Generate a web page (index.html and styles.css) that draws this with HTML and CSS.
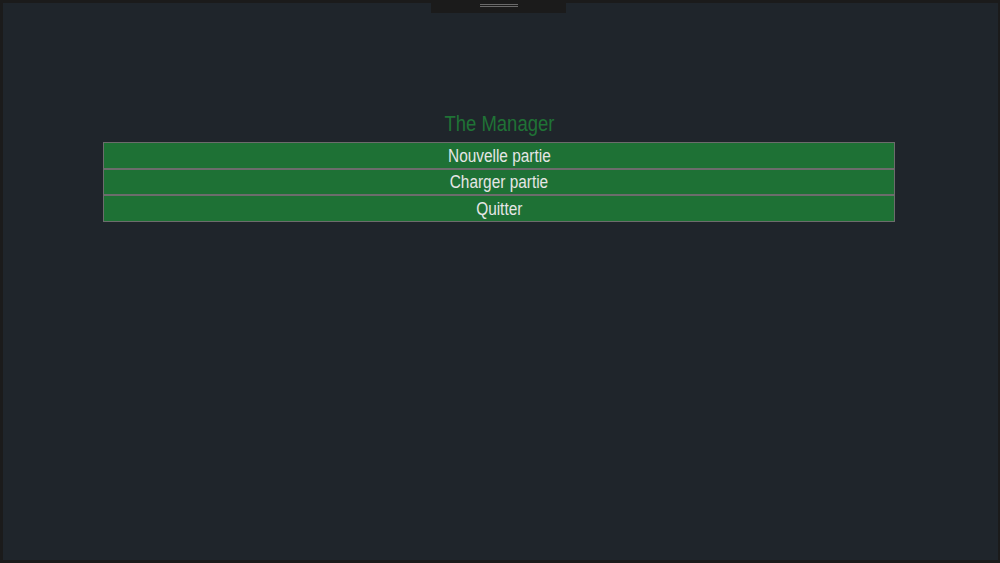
FILE: index.html
```html
<!DOCTYPE html>
<html lang="fr">
<head>
<meta charset="utf-8">
<title>The Manager</title>
<link rel="stylesheet" href="styles.css">
</head>
<body>
<div class="frame">
  <div class="handle"><span class="grip"></span><span class="grip"></span></div>
  <main class="menu">
    <h1 class="title"><span class="narrow">The Manager</span></h1>
    <div class="buttons">
      <button class="btn"><span class="narrow">Nouvelle partie</span></button>
      <button class="btn mid"><span class="narrow">Charger partie</span></button>
      <button class="btn"><span class="narrow">Quitter</span></button>
    </div>
  </main>
</div>
</body>
</html>
```

FILE: styles.css
```css
html, body {
  margin: 0;
  padding: 0;
  height: 100%;
}
body {
  background: #1b1b1b;
  font-family: "Liberation Sans", Arial, sans-serif;
  overflow: hidden;
}
.frame {
  position: relative;
  margin: 3px 2px 0 3px;
  height: 557px;
  background: #1f252b;
}
.handle {
  position: absolute;
  top: -3px;
  left: 428px;
  width: 135px;
  height: 13px;
  background: #1b1b1b;
  display: flex;
  flex-direction: column;
  align-items: center;
  padding-top: 4px;
  box-sizing: border-box;
}
.grip {
  display: block;
  width: 38px;
  height: 1px;
  background: #6a6a6a;
  margin-bottom: 1px;
}
.menu {
  display: flex;
  flex-direction: column;
  align-items: stretch;
  padding: 108px 103px 0 100px;
}
.title {
  margin: 0 0 5px;
  text-align: center;
  font-weight: normal;
  font-size: 22px;
  line-height: 26px;
  color: #1f7336;
}
.narrow {
  display: inline-block;
  transform: scaleX(0.84);
}
.buttons {
  display: flex;
  flex-direction: column;
}
.btn {
  height: 27px;
  box-sizing: border-box;
  margin: 0;
  padding: 0;
  border: 1px solid #6c6c6c;
  background: #1e7135;
  color: #e6e6e6;
  font-family: "Liberation Sans", Arial, sans-serif;
  font-size: 17.5px;
  line-height: 24px;
  text-align: center;
}
.btn.mid {
  height: 26px;
}
.btn .narrow {
  transform: scaleX(0.88);
}
```
